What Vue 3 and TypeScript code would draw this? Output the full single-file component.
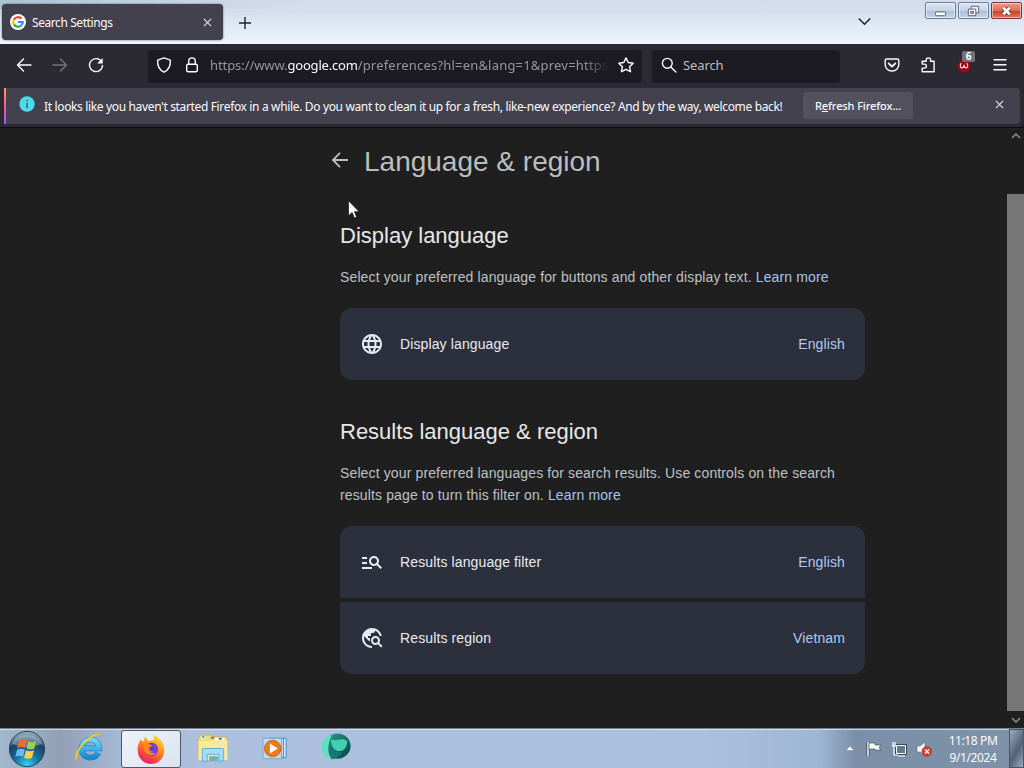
<script setup lang="ts">
interface Row {
  icon: 'globe' | 'filter' | 'region'
  label: string
  value: string
}

interface Section {
  id: string
  title: string
  lines: string[]
  rows: Row[]
}

const sections: Section[] = [
  {
    id: 'display',
    title: 'Display language',
    lines: ['Select your preferred language for buttons and other display text.'],
    rows: [{ icon: 'globe', label: 'Display language', value: 'English' }],
  },
  {
    id: 'results',
    title: 'Results language & region',
    lines: [
      'Select your preferred languages for search results. Use controls on the search',
      'results page to turn this filter on.',
    ],
    rows: [
      { icon: 'filter', label: 'Results language filter', value: 'English' },
      { icon: 'region', label: 'Results region', value: 'Vietnam' },
    ],
  },
]

const iconPaths: Record<Row['icon'], string> = {
  globe:
    'M11.99 2C6.47 2 2 6.48 2 12s4.47 10 9.99 10C17.52 22 22 17.52 22 12S17.52 2 11.99 2zm6.93 6h-2.95c-.32-1.25-.78-2.45-1.38-3.56 1.84.63 3.37 1.91 4.33 3.56zM12 4.04c.83 1.2 1.48 2.53 1.91 3.96h-3.82c.43-1.43 1.08-2.76 1.91-3.96zM4.26 14C4.1 13.36 4 12.69 4 12s.1-1.36.26-2h3.38c-.08.66-.14 1.32-.14 2 0 .68.06 1.34.14 2H4.26zm.82 2h2.95c.32 1.25.78 2.45 1.38 3.56-1.84-.63-3.37-1.9-4.33-3.56zm2.95-8H5.08c.96-1.66 2.49-2.93 4.33-3.56C8.81 5.55 8.35 6.75 8.03 8zM12 19.96c-.83-1.2-1.48-2.53-1.91-3.96h3.82c-.43 1.43-1.08 2.76-1.91 3.96zM14.34 14H9.66c-.09-.66-.16-1.32-.16-2 0-.68.07-1.35.16-2h4.68c.09.65.16 1.32.16 2 0 .68-.07 1.34-.16 2zm.25 5.56c.6-1.11 1.06-2.31 1.38-3.56h2.95c-.96 1.65-2.49 2.93-4.33 3.56zM16.36 14c.08-.66.14-1.32.14-2 0-.68-.06-1.34-.14-2h3.38c.16.64.26 1.31.26 2s-.1 1.36-.26 2h-3.38z',
  filter:
    'M7 9H2V7h5v2zm0 3H2v2h5v-2zm13.59 7l-3.83-3.83c-.8.52-1.74.83-2.76.83-2.76 0-5-2.24-5-5s2.24-5 5-5 5 2.24 5 5c0 1.02-.31 1.96-.83 2.75L22 17.59 20.59 19zM17 11c0-1.65-1.35-3-3-3s-3 1.35-3 3 1.35 3 3 3 3-1.35 3-3zM2 19h10v-2H2v2z',
  region:
    'M19.3 16.9c.4-.7.7-1.5.7-2.4 0-2.5-2-4.5-4.5-4.5S11 12 11 14.5s2 4.5 4.5 4.5c.9 0 1.7-.3 2.4-.7l3.2 3.2 1.4-1.4-3.2-3.2zm-3.8.1c-1.4 0-2.5-1.1-2.5-2.5s1.100-2.500 2.500-2.500 2.500 1.100 2.500 2.500-1.100 2.500-2.500 2.500zM12 20v2C6.480 22 2 17.520 2 12S6.480 2 12 2c4.840 0 8.870 3.440 9.800 8h-2.070c-.64-2.460-2.400-4.470-4.730-5.410V5c0 1.100-.9 2-2 2h-2v2c0 .55-.45 1-1 1H8v2h2v3H9l-4.790-4.790C4.080 10.790 4 11.380 4 12c0 4.410 3.590 8 8 8z',
}
</script>

<template>
  <div class="desktop">
    <header class="titlebar">
      <div class="tab">
        <svg class="favicon" viewBox="0 0 16 16">
          <circle cx="8" cy="8" r="8" fill="#fff" />
          <g fill="none" stroke-width="2.2">
            <path d="M3.9 5.6A4.8 4.8 0 0 1 11.4 4.6" stroke="#ea4335" />
            <path d="M3.9 5.6A4.8 4.8 0 0 0 3.9 10.4" stroke="#fbbc05" />
            <path d="M3.9 10.4A4.8 4.8 0 0 0 11.2 11.5" stroke="#34a853" />
            <path d="M8 8H12.8A4.8 4.8 0 0 1 11.2 11.5" stroke="#4285f4" />
          </g>
        </svg>
        <span class="tab-title">Search Settings</span>
        <svg class="tab-close" viewBox="0 0 10 10"><path d="M1 1l8 8M9 1l-8 8" /></svg>
      </div>
      <svg class="new-tab" viewBox="0 0 12 12"><path d="M6 0v12M0 6h12" /></svg>
      <svg class="all-tabs" viewBox="0 0 12 8"><path d="M.7 1.2L6 6.5l5.300-5.300" /></svg>
      <div class="window-buttons">
        <div class="wbtn">
          <svg viewBox="0 0 30 17"><rect x="9.500" y="9.500" width="11" height="4" rx="1" fill="#fff" stroke="#535c6e" /></svg>
        </div>
        <div class="wbtn">
          <svg viewBox="0 0 30 17" fill="#f6f8fc" stroke="#535c6e">
            <path d="M12.500 3.500h8v7h-8z" /><path d="M9.500 6.500h8v7h-8z" /><path d="M12 9h3v2h-3z" fill="#b9c8de" />
          </svg>
        </div>
        <div class="wbtn wclose">
          <svg viewBox="0 0 30 17">
            <path d="M11.500 5l7 7M18.500 5l-7 7" stroke="#69352f" stroke-width="4.500" />
            <path d="M11.500 5l7 7M18.500 5l-7 7" stroke="#fff" stroke-width="2.800" />
          </svg>
        </div>
      </div>
    </header>

    <nav class="toolbar">
      <svg class="tool back" viewBox="0 0 16 16"><path d="M15 8H1.500M7.500 2L1.500 8l6 6" /></svg>
      <svg class="tool forward" viewBox="0 0 16 16"><path d="M1 8h13.500M8.500 2l6 6-6 6" /></svg>
      <svg class="tool reload" viewBox="0 0 16 16">
        <path d="M13.600 4.800A6.500 6.500 0 1 0 14.500 8.500" /><path d="M14.700 1v5.500H9.200z" fill="#fbfbfe" stroke="none" />
      </svg>
      <div class="urlbar">
        <svg class="tool" viewBox="0 0 16 16"><path d="M8 .9l6.400 2.300c.2 5.500-1.500 9.700-6.400 12C3.100 12.900 1.400 8.700 1.600 3.200z" /></svg>
        <svg class="tool lock" viewBox="0 0 16 16"><rect x="2.700" y="7.200" width="10.600" height="7.600" rx="1.400" /><path d="M4.700 7V4.200a3.300 3.300 0 0 1 6.600 0V7" /></svg>
        <span class="url">https://www.<b>google.com</b><span class="url-path">/preferences?hl=en&amp;lang=1&amp;prev=https</span></span>
        <svg class="tool star" viewBox="0 0 16 16"><path d="M8 .9l2.200 4.600 5 .7-3.600 3.500.9 5L8 12.300l-4.500 2.400.9-5L.8 6.200l5-.7z" /></svg>
      </div>
      <div class="searchbar">
        <svg class="tool" viewBox="0 0 16 16"><circle cx="6.300" cy="6.300" r="4.900" /><path d="M9.900 9.900l5 5" /></svg>
        <span>Search</span>
      </div>
      <svg class="tool pocket" viewBox="0 0 16 16"><path d="M2.600 2h10.800c.8 0 1.400.6 1.400 1.400v4A6.600 6.600 0 0 1 8 14a6.600 6.600 0 0 1-6.800-6.600v-4C1.200 2.600 1.800 2 2.600 2z" /><path d="M4.600 6.400L8 9.500l3.400-3.100" stroke-width="1.700" /></svg>
      <svg class="tool puzzle" viewBox="0 0 16 16"><path d="M6.200 4.300V3.100a2.200 2.200 0 0 1 4.400 0v1.200h3.500v10.500H2.200v-3.700h2.200a2 2 0 0 0 0-4H2.200V4.300z" /></svg>
      <div class="extension">
        <svg viewBox="0 0 16 16"><circle cx="8" cy="8.800" r="6.600" fill="#a40010" /><path d="M5.200 6C3.800 8.500 4 10.800 5.800 10.800 7.200 10.800 8 9.800 8 7.800 8 9.800 8.800 10.800 10.200 10.800 12 10.800 12.200 8.500 10.800 6" fill="none" stroke="#f7d9dc" stroke-width="1.200" /></svg>
        <span class="badge">6</span>
      </div>
      <svg class="tool menu" viewBox="0 0 16 16"><path d="M2 2.700h12M2 7.700h12M2 12.700h12" /></svg>
    </nav>

    <div class="notice">
      <svg class="info" viewBox="0 0 16 16"><circle cx="8" cy="8" r="7.700" fill="#4bdcec" /><path d="M8 7v5M8 3.700v1.700" stroke="#34616f" stroke-width="1.500" /></svg>
      <span class="notice-text">It looks like you haven't started Firefox in a while. Do you want to clean it up for a fresh, like-new experience? And by the way, welcome back!</span>
      <div class="refresh"><span>R<u>e</u>fresh Firefox...</span></div>
      <svg class="notice-close" viewBox="0 0 10 10"><path d="M1 1l8 8M9 1l-8 8" /></svg>
    </div>

    <main class="viewport">
      <div class="page">
        <div class="page-head">
          <svg class="page-back" viewBox="0 0 18 16"><path d="M17 8H2M9 .9L1.900 8 9 15.100" /></svg>
          <h1>Language &amp; region</h1>
        </div>
        <section v-for="s in sections" :key="s.id" :class="s.id">
          <h2>{{ s.title }}</h2>
          <p>
            <template v-for="(line, i) in s.lines" :key="line"><br v-if="i > 0" />{{ line }}</template>{{ ' ' }}<a>Learn more</a>
          </p>
          <div class="cards">
            <div v-for="r in s.rows" :key="r.label" class="card">
              <svg class="row-icon" viewBox="0 0 24 24"><path :d="iconPaths[r.icon]" /></svg>
              <span class="label">{{ r.label }}</span>
              <span class="value">{{ r.value }}</span>
            </div>
          </div>
        </section>
        <svg class="cursor" viewBox="0 0 12 19"><path d="M.5.800v15l3.600-3.300 2.300 5.400 2.300-1-2.300-5.200h4.800z" fill="#fff" stroke="#111" stroke-width=".7" /></svg>
      </div>
      <div class="scrollbar">
        <svg viewBox="0 0 10 6"><path d="M1 5l4-4 4 4" /></svg>
        <div class="thumb"></div>
        <svg viewBox="0 0 10 6"><path d="M1 1l4 4 4-4" /></svg>
      </div>
    </main>

    <footer class="taskbar">
      <svg class="orb" viewBox="0 0 38 38">
        <defs>
          <radialGradient id="orb" cx=".5" cy=".95" r=".9"><stop offset="0" stop-color="#35d3f5" /><stop offset=".4" stop-color="#14709e" /><stop offset=".75" stop-color="#1c425f" /><stop offset="1" stop-color="#90a9bd" /></radialGradient>
        </defs>
        <circle cx="19" cy="19" r="17.600" fill="url(#orb)" stroke="#24455f" />
        <path d="M4 14C8 2 30 2 34 14 24 18 14 17 4 14z" fill="#fff" opacity=".3" />
        <path d="M11 11c3-2 5-2 8-.5l-1.800 7.500c-3-1.500-5-1.200-8 .3z" fill="#f26a2c" />
        <path d="M20.300 11c3 1.500 5 1.500 8 0l-2 7.500c-3 1.500-5 1.300-7.800 0z" fill="#99cf52" />
        <path d="M9 20c3-1.700 5-1.700 7.800-.3l-1.900 7.200c-3-1.500-5-1.300-7.600.2z" fill="#69bdf0" />
        <path d="M18 20.200c3 1.500 5 1.500 8 0l-2 7.500c-3 1.500-5 1.300-7.900 0z" fill="#ffd04a" />
      </svg>
      <div class="slot ie-slot">
        <svg class="ie" viewBox="0 0 34 34">
          <defs><linearGradient id="ie" x2="0" y2="1"><stop stop-color="#6bdcfa" /><stop offset="1" stop-color="#1588d0" /></linearGradient></defs>
          <path d="M27 23A9.600 9.600 0 1 1 28 18.500H10" fill="none" stroke="#1b7dbd" stroke-width="6" />
          <path d="M27 23A9.600 9.600 0 1 1 28 18.500H10" fill="none" stroke="url(#ie)" stroke-width="4.800" />
          <path d="M4 32C-1 29 6 15 17 7c5-4 11-6 13-3-2-1-6 0-10 3C10 13 3 24 4 32z" fill="#ffda3b" stroke="#d5a928" stroke-width=".6" />
        </svg>
      </div>
      <div class="slot active">
        <svg class="fox" viewBox="0 0 34 34">
          <defs>
            <linearGradient id="fox" x1=".8" y1="0" x2=".3" y2="1"><stop stop-color="#ffe33e" /><stop offset=".45" stop-color="#ff8c1e" /><stop offset=".8" stop-color="#f83a48" /><stop offset="1" stop-color="#e51f76" /></linearGradient>
          </defs>
          <path d="M5 7l3 3 2-6 4 5c2-1 4-1 6-1l-1-6c7 3 12 9 12 17A14.500 14.500 0 0 1 2 20c-1-5 1-9 3-13z" fill="url(#fox)" />
          <circle cx="17" cy="18" r="7.200" fill="#6b3cc9" />
          <path d="M9 13c4-3 7 0 10 1-2 1-4 1-5 3 1 4 6 4 9 1-1 7-8 8-12 4-2-3-3-6-2-9z" fill="#ff8420" />
          <path d="M16 13c4-3 8 1 8 5-1 4-5 5-8 3 5 0 6-5 0-8z" fill="#7a43d8" />
        </svg>
      </div>
      <div class="slot">
        <svg class="folder" viewBox="0 0 34 32">
          <path d="M2 5l3-3h9l2 2h14l2 3v20H2z" fill="#eedb83" stroke="#c8af58" />
          <path d="M5 3h4v3H5zM19 5h10v3H19z" fill="#f7fbec" /><path d="M6 3h2v2H6z" fill="#2aa367" /><path d="M15 4h3v2h-3z" fill="#d2574a" /><path d="M23 5h3v2h-3z" fill="#2e7fb5" />
          <path d="M2 8h30v20H2z" fill="#f8e99d" />
          <path d="M6 29V17q0-1 1-1h20q1 0 1 1v12h-5v-7H11v7z" fill="#a7dcf5" stroke="#5baedb" />
          <path d="M13 24h9v5h-9z" fill="#78a9c6" />
        </svg>
      </div>
      <div class="slot">
        <svg class="player" viewBox="0 0 28 26">
          <path d="M8 2h18v21H8z" fill="#d9e8f6" stroke="#3989ca" /><path d="M23 2v21" stroke="#2f7fc1" />
          <path d="M1 2h20v22H1z" fill="#c4daef" stroke="#6ea4d1" />
          <circle cx="11.500" cy="13" r="8.800" fill="#ef7a19" stroke="#c75c12" /><path d="M8.500 7.500l8.500 5.500-8.500 5.500z" fill="#fff" />
        </svg>
      </div>
      <div class="slot">
        <svg class="sphere" viewBox="0 0 34 30">
          <defs><linearGradient id="sph" x2="1" y2="1"><stop stop-color="#28a48e" /><stop offset="1" stop-color="#0a3d42" /></linearGradient></defs>
          <ellipse cx="19" cy="14" rx="13.500" ry="13" fill="url(#sph)" />
          <path d="M13 3C0 6-2 22 13 28 8 20 9 12 13 3z" fill="#5ce0bd" />
          <path d="M12 7c6 3 12-3 17 2 0 7-4 11-10 10-4-1-6-5-7-12z" fill="#43cdb1" />
          <path d="M13 28c4-1 8-3 11-8-5 1-9 0-12-4-1 5-1 8 1 12z" fill="#127a73" />
        </svg>
      </div>
      <div class="tray">
        <svg class="up" viewBox="0 0 8 5"><path d="M0 4.500L4 0l4 4.500z" fill="#fff" stroke="#596b80" stroke-width=".4" /></svg>
        <svg class="flag" viewBox="0 0 16 16"><path d="M2 1v14" stroke="#303c4b" stroke-width="3" /><path d="M2 1v14" stroke="#fff" stroke-width="1.500" /><path d="M3 2h6v2h6l-2 2.500L15 9H9V8H3z" fill="#fff" stroke="#455267" stroke-width=".7" /></svg>
        <svg class="net" viewBox="0 0 16 16"><path d="M5.500 4.500h9v8h-9z" fill="#718ba4" stroke="#242e39" stroke-width="2.500" /><path d="M5.500 4.500h9v8h-9z" fill="#5d7a93" stroke="#fff" /><path d="M2 1v4M4 1v4M0.800 5h4.500M3 5v9h4M7 15h7" fill="none" stroke="#fff" stroke-width="1.200" /></svg>
        <svg class="sound" viewBox="0 0 16 16"><path d="M1 5h3l5-4v14l-5-4H1z" fill="#f8f9fc" stroke="#5c6677" stroke-width=".6" /><circle cx="10.800" cy="10.500" r="5" fill="#db3d2e" stroke="#af3024" stroke-width=".5" /><path d="M9 8.500l4 4M13 8.500l-4 4" stroke="#fff" stroke-width="1.400" /></svg>
        <div class="clock"><span>11:18 PM</span><span>9/1/2024</span></div>
        <div class="show-desktop"></div>
      </div>
    </footer>
  </div>
</template>

<style>
html,
body {
  margin: 0;
  overflow: hidden;
}
</style>

<style scoped>
* {
  box-sizing: border-box;
}
.desktop {
  width: 1024px;
  height: 768px;
  display: flex;
  flex-direction: column;
  overflow: hidden;
  background: #1f1f1f;
  font-family: "Noto Sans", "Open Sans", sans-serif;
  color: #fbfbfe;
}
svg {
  display: block;
  flex: none;
}
.titlebar {
  height: 44px;
  flex: none;
  display: flex;
  align-items: flex-start;
  background: linear-gradient(90deg, rgba(125, 178, 190, 0.5), rgba(160, 190, 205, 0.25) 180px, transparent 300px) top / 100% 9px no-repeat, linear-gradient(#d5dbea 0, #d4dfec 12px, #dfe9f4 24px, #e9f1fa 40px, #f4f8fd 44px);
}
.tab {
  width: 221px;
  height: 36px;
  margin: 4px 0 0 2px;
  padding: 0 11px 0 8px;
  display: flex;
  align-items: center;
  border-radius: 4px;
  background: #42414d;
  box-shadow: 0 0 2px #535967;
}
.favicon {
  width: 16px;
  height: 16px;
}
.tab-title {
  flex: 1;
  margin: 1px 0 0 6px;
  font-size: 12px;
  letter-spacing: -0.42px;
  white-space: nowrap;
}
.tab-close,
.notice-close {
  width: 9px;
  height: 9px;
  stroke: #e5e5ea;
  stroke-width: 1.2;
}
.new-tab {
  width: 12px;
  height: 12px;
  margin: 17px 0 0 16px;
  stroke: #20202a;
  stroke-width: 1.4;
}
.all-tabs {
  width: 13px;
  height: 9px;
  margin: 17px 0 0 auto;
  fill: none;
  stroke: #20202a;
  stroke-width: 1.4;
}
.window-buttons {
  display: flex;
  gap: 2px;
  margin: 2px 2px 0 54px;
}
.wbtn {
  width: 31px;
  height: 17px;
  border: 1px solid #6b7c96;
  border-radius: 2px;
  background: linear-gradient(#dbe6f3, #c6d4e7 50%, #a9bdd8 52%, #c7d7ea);
  box-shadow: inset 0 0 0 1px rgba(255, 255, 255, 0.5);
}
.wbtn svg {
  width: 29px;
  height: 16px;
}
.wclose {
  border-color: #713a38;
  background: linear-gradient(#e99b89, #dc7058 50%, #c8402a 52%, #df7558);
}
.toolbar {
  height: 44px;
  flex: none;
  display: flex;
  align-items: center;
  padding: 0 16px;
  background: #2b2a33;
}
.tool {
  width: 16px;
  height: 16px;
  fill: none;
  stroke: #fbfbfe;
  stroke-width: 1.4;
  stroke-linejoin: round;
  stroke-linecap: round;
}
.toolbar > .tool {
  margin-top: -3px;
}
.forward {
  margin-left: 20px;
  stroke: #74737c;
}
.reload {
  margin-left: 20px;
}
.urlbar,
.searchbar {
  height: 33px;
  display: flex;
  align-items: center;
  border-radius: 4px;
  background: #1c1b22;
  font-size: 13px;
}
.urlbar .tool,
.searchbar .tool {
  margin-top: -3px;
}
.urlbar {
  width: 494px;
  margin-left: 44px;
  padding: 0 8px;
}
.urlbar .lock {
  margin-left: 12px;
}
.url {
  width: 398px;
  margin: -2px 0 0 10px;
  overflow: hidden;
  white-space: nowrap;
  color: #96959e;
  letter-spacing: -0.08px;
  mask-image: linear-gradient(90deg, #000 374px, transparent 399px);
}
.url b {
  font-weight: 400;
  letter-spacing: -0.2px;
  color: #fbfbfe;
}
.url-path {
  letter-spacing: 0.2px;
}
.star {
  margin-left: auto;
}
.searchbar {
  width: 188px;
  margin-left: 10px;
  padding: 0 9px;
  gap: 6px;
  color: #bcbbc3;
}
.searchbar span {
  margin-top: -2px;
  letter-spacing: -0.1px;
}
.toolbar > .pocket {
  margin-left: 44px;
}
.toolbar > .puzzle {
  margin-left: 20px;
}
.extension {
  position: relative;
  width: 16px;
  height: 18px;
  margin-left: 20px;
}
.extension svg {
  width: 16px;
  height: 16px;
}
.badge {
  position: absolute;
  left: 6px;
  top: -6px;
  width: 13px;
  height: 11px;
  border-radius: 2px;
  background: #6f7479;
  font: 700 10px/11px "Noto Sans", sans-serif;
  text-align: center;
}
.menu {
  margin-left: 20px;
}
.notice {
  height: 36px;
  flex: none;
  display: flex;
  align-items: center;
  margin: 0 4px;
  padding-left: 15px;
  border-radius: 0 4px 4px 0;
  background: linear-gradient(#ff9a63, #f858a0 50%, #9459ff) left / 2px 100% no-repeat, #42414d;
  box-shadow: 0 0 0 4px #2b2a33;
}
.info {
  width: 16px;
  height: 16px;
  margin-top: -4px;
}
.notice-text {
  width: 740px;
  margin: 1px 0 0 9px;
  font-size: 12px;
  letter-spacing: -0.35px;
  white-space: nowrap;
}
.refresh {
  width: 110px;
  height: 27px;
  margin-left: 19px;
  margin-top: -1px;
  display: flex;
  align-items: center;
  justify-content: center;
  border-radius: 3px;
  background: #52515d;
  font-size: 11px;
  font-weight: 500;
  letter-spacing: -0.1px;
  white-space: nowrap;
}
.notice-close {
  margin: -4px 16px 0 auto;
}
.viewport {
  flex: 1;
  margin-top: 3px;
  border-top: 1px solid #0d0d11;
  position: relative;
  min-height: 0;
  display: flex;
  justify-content: space-between;
  background: #1f1f1f;
  font-family: "Liberation Sans", Arial, sans-serif;
}
.page {
  width: 865px;
  padding-left: 340px;
}
.page-head {
  display: flex;
  align-items: center;
  height: 32px;
  margin: 18px 0 0 -9px;
}
.page-back {
  width: 18px;
  height: 16px;
  margin-top: -4px;
  fill: none;
  stroke: #bdbdbd;
  stroke-width: 1.8;
}
h1 {
  margin: 0 0 0 15px;
  font-size: 28px;
  line-height: 32px;
  font-weight: 400;
  color: #bdbdbd;
}
h2 {
  margin: 0;
  font-size: 22px;
  line-height: 28px;
  font-weight: 400;
  color: #e8e8e8;
}
.display {
  margin-top: 44px;
}
.results {
  margin-top: 38px;
}
p {
  margin: 16px 0 20px;
  font-size: 14px;
  line-height: 22px;
  letter-spacing: 0.13px;
  white-space: nowrap;
  color: #bdc1c6;
}
a {
  color: #a3c5f5;
}
.cards {
  display: flex;
  flex-direction: column;
  gap: 4px;
  border-radius: 12px;
  overflow: hidden;
}
.card {
  height: 72px;
  padding: 0 20px;
  display: flex;
  align-items: center;
  background: #2c303d;
  font-size: 14px;
  letter-spacing: 0.12px;
}
.row-icon {
  width: 24px;
  height: 24px;
  fill: #e8eaf2;
}
.label {
  margin-left: 16px;
  color: #e8eaf2;
}
.value {
  margin-left: auto;
  color: #afc9f3;
}
.cursor {
  position: absolute;
  left: 348px;
  top: 72px;
  width: 12px;
  height: 19px;
}
.scrollbar {
  width: 17px;
  display: flex;
  flex-direction: column;
  align-items: center;
  padding: 5px 0 5px;
}
.scrollbar svg {
  width: 10px;
  height: 6px;
  fill: none;
  stroke: #858585;
  stroke-width: 1.7;
}
.thumb {
  width: 17px;
  flex: 1;
  margin: 55px 0 6px;
  background: #777;
}
.taskbar {
  height: 40px;
  flex: none;
  display: flex;
  align-items: center;
  border-top: 1px solid #75818f;
  background: linear-gradient(90deg, #a2b8cd 0, #929fb5 60px, #a5b8d4 120px, #acc0de 200px, #abc0df 700px, #9db7d2 820px, #7b8fa8 855px, #7e91a9 1000px);
  box-shadow: inset 0 1px rgba(230, 240, 250, 0.65);
}
.orb {
  width: 38px;
  height: 38px;
  margin: 0 20px 0 8px;
}
.slot {
  width: 60px;
  height: 38px;
  margin-right: 2px;
  display: flex;
  align-items: center;
  justify-content: center;
}
.ie-slot {
  width: 53px;
  padding: 0 7px 3px 0;
}
.active {
  border: 1px solid #4d5969;
  border-radius: 3px;
  background: linear-gradient(135deg, #eef2f8, #dae4ef);
}
.ie {
  width: 32px;
  height: 32px;
}
.fox {
  width: 31px;
  height: 31px;
}
.folder {
  width: 34px;
  height: 31px;
}
.player {
  width: 26px;
  height: 25px;
}
.sphere {
  width: 33px;
  height: 30px;
  margin: -4px 4px 0 0;
}
.tray {
  height: 39px;
  margin-left: auto;
  display: flex;
  align-items: center;
}
.up {
  width: 8px;
  height: 5px;
  margin-right: 12px;
}
.flag,
.net,
.sound {
  width: 16px;
  height: 16px;
  margin-right: 9px;
}
.clock {
  width: 66px;
  margin: 0 3px 0 -1px;
  display: flex;
  flex-direction: column;
  align-items: center;
  font-size: 12px;
  line-height: 17px;
  letter-spacing: -0.4px;
}
.show-desktop {
  width: 15px;
  height: 39px;
  border: 1px solid #47566a;
  background: linear-gradient(120deg, #9cadc0, #536276 55%, #98a9bf);
}
</style>
